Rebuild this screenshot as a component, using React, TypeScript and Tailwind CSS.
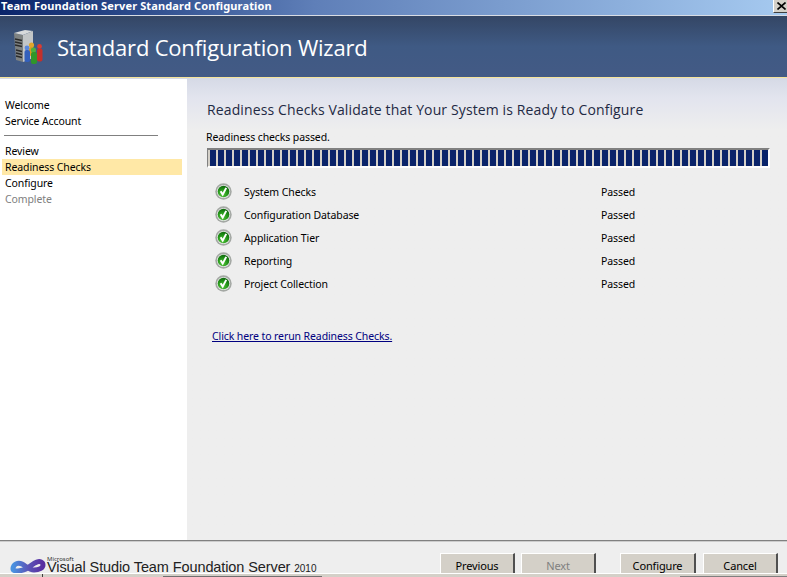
import React from "react";

const checks = ["System Checks", "Configuration Database", "Application Tier", "Reporting", "Project Collection"];

function Check() {
  return (
    <svg width="17" height="17" viewBox="0 0 17 17" className="shrink-0">
      <defs>
        <radialGradient id="g" cx="0.4" cy="0.75" r="0.8">
          <stop offset="0" stopColor="#55c93a" />
          <stop offset="0.6" stopColor="#1f8f16" />
          <stop offset="1" stopColor="#0b5f0b" />
        </radialGradient>
      </defs>
      <circle cx="8.5" cy="8.5" r="8.2" fill="#a4a8a4" />
      <circle cx="8.5" cy="8.5" r="6.6" fill="#e4e8e4" />
      <circle cx="8.5" cy="8.5" r="5.8" fill="url(#g)" />
      <path d="M5.6 8.2 L7.7 11.6 L11.2 4.9" fill="none" stroke="#fff" strokeWidth="2" />
    </svg>
  );
}

function ServerIcon() {
  return (
    <svg width="32" height="34" viewBox="0 0 32 34">
      <path d="M1 3 L10 5 L10 32 L3 30 Z" fill="#7e8282" />
      <path d="M1 3 L12 0 L20 1 L10 5 Z" fill="#d8dadb" />
      <path d="M10 5 L20 1 L20 28 L10 32 Z" fill="#c3c6c7" />
      <path d="M2 9 L9 10.5 M2 12 L9 13.5 M2 15 L9 16.5 M3 20 L9 21.5 M3 23 L9 24.5 M3 26 L9 27.5" stroke="#2b2b2b" strokeWidth="1.4" />
      <circle cx="18.5" cy="15" r="2.6" fill="#e2a62a" />
      <rect x="16" y="17" width="5" height="9" rx="2" fill="#d89a20" />
      <circle cx="26.5" cy="16.5" r="2.4" fill="#dc3c30" />
      <rect x="24" y="18.5" width="5.5" height="13" rx="2" fill="#c4302a" />
      <circle cx="14" cy="18" r="2.4" fill="#5a88dc" />
      <rect x="11.5" y="20" width="5.5" height="12" rx="2" fill="#3360bc" />
      <circle cx="20.5" cy="20" r="2.6" fill="#4cb03c" />
      <rect x="18" y="22" width="6" height="12" rx="2" fill="#2f962a" />
    </svg>
  );
}

function Logo() {
  return (
    <svg width="37" height="16" viewBox="0 0 37 16" className="shrink-0">
      <defs>
        <linearGradient id="v" x1="0" x2="1" y1="0" y2="0">
          <stop offset="0" stopColor="#4a92e0" />
          <stop offset="0.5" stopColor="#5a56b8" />
          <stop offset="1" stopColor="#5a2ea0" />
        </linearGradient>
      </defs>
      <path
        d="M3 12 C3 7 8 5 12 7 C16 9 19 13 24 13 C29 13 33 11 33 8 C33 5 30 4 27 5 C23 6 20 10 16 12 C12 14 3 15 3 12 Z"
        fill="none"
        stroke="url(#v)"
        strokeWidth="5"
      />
    </svg>
  );
}

function Btn({ label, disabled, w }: { label: string; disabled?: boolean; w: string }) {
  return (
    <div
      className={`${w} h-[20px] shrink-0 bg-[#d4d0c8] border-t border-l border-t-white border-l-white border-r-2 border-r-[#505050] flex items-end justify-center text-[11px] tracking-[-0.15px] leading-[15px] ${disabled ? "text-[#808080]" : "text-black"}`}
    >
      {label}
    </div>
  );
}

export default function App() {
  return (
    <div className="w-[787px] h-[577px] overflow-hidden flex flex-col bg-[#eeeeee] text-[10.5px] tracking-[-0.1px] leading-[16px] text-black font-['Noto_Sans',sans-serif]">
      {/* title bar */}
      <div className="h-[15px] shrink-0 flex items-start justify-between bg-gradient-to-r from-[#0a246a] via-[#5f7fb8] via-40% to-[#a6caf0]">
        <span className="pl-[1px] text-[11px] leading-[12px] tracking-[0.13px] font-bold text-white whitespace-nowrap">
          Team Foundation Server Standard Configuration
        </span>
        <div className="w-[15px] h-[13px] mr-[-1px] bg-[#d4d0c8] border-l border-b border-l-white border-b-[#404040] flex items-center justify-center">
          <svg width="9" height="8" viewBox="0 0 9 8">
            <path d="M0.5 0.5 L8.5 7.5 M8.5 0.5 L0.5 7.5" stroke="#000" strokeWidth="1.6" />
          </svg>
        </div>
      </div>
      <div className="h-px shrink-0 bg-[#d8dce4]" />
      {/* header */}
      <div className="h-[61px] shrink-0 flex items-center bg-gradient-to-b from-[#344665] via-[#3f5a84] via-50% to-[#435a85] pl-[13px]">
        <ServerIcon />
        <span className="ml-[12px] text-[22px] leading-[32px] tracking-[-0.2px] text-white whitespace-nowrap font-['Open_Sans',sans-serif]">
          Standard Configuration Wizard
        </span>
      </div>
      <div className="h-px shrink-0 bg-[#f5e39a]" />
      <div className="h-px shrink-0 bg-[#d5d9e6]" />
      {/* body */}
      <div className="h-[461px] shrink-0 flex">
        <div className="w-[187px] shrink-0 bg-white pt-[18px]">
          <div className="pl-[5px]">Welcome</div>
          <div className="pl-[5px]">Service Account</div>
          <div className="ml-[4px] mr-[29px] mt-[6px] mb-[7px] h-px bg-[#808080]" />
          <div className="pl-[5px]">Review</div>
          <div className="ml-[2px] mr-[5px] pl-[3px] bg-[#ffe8a6]">Readiness Checks</div>
          <div className="pl-[5px]">Configure</div>
          <div className="pl-[5px] text-[#808080]">Complete</div>
        </div>
        <div className="flex-1 bg-gradient-to-b from-[#d6dae6] via-[#e2e4ee] via-[4%] to-[#eeeeee] to-[11%] pl-[20px] pr-[19px] pt-[21px]">
          <div className="text-[14px] leading-[20px] tracking-[0.12px] text-[#1f2a44] whitespace-nowrap font-['Open_Sans',sans-serif]">
            Readiness Checks Validate that Your System is Ready to Configure
          </div>
          <div className="mt-[11px] -ml-[1px] leading-[13px]">Readiness checks passed.</div>
          <div className="mt-[4px] h-[20px] border-t-2 border-l border-t-[#808080] border-l-[#808080] border-r-2 border-b-2 border-r-white border-b-white bg-[#d4d0c8] pl-[2px] flex gap-[2px] overflow-hidden">
            {Array.from({ length: 70 }).map((_, i) => (
              <div key={i} className="w-[6px] shrink-0 bg-[#0a246a]" />
            ))}
          </div>
          <div className="mt-[15px] flex flex-col gap-[6px] pl-[8px]">
            {checks.map((c) => (
              <div key={c} className="h-[17px] flex items-center">
                <Check />
                <span className="ml-[12px] w-[357px]">{c}</span>
                <span>Passed</span>
              </div>
            ))}
          </div>
          <div className="mt-[36px] pl-[5px] text-[#000080] underline whitespace-nowrap">
            Click here to rerun Readiness Checks.
          </div>
        </div>
      </div>
      {/* footer */}
      <div className="h-[2px] shrink-0 bg-[#808080] border-b border-b-[#cccccc]" />
      <div className="h-[31px] shrink-0 flex items-start overflow-hidden">
        <div className="w-[440px] shrink-0 pl-[10px] flex relative h-full overflow-hidden">
          <div className="mt-[15px]"><Logo /></div>
          <div className="absolute left-[47px] top-[13px] text-[6px] leading-[8px] tracking-normal text-[#333]">Microsoft</div>
          <div className="mt-[16px] text-[14.5px] leading-[18px] tracking-[-0.1px] text-[#222] whitespace-nowrap font-['Liberation_Sans',sans-serif]">
            Visual Studio Team Foundation Server <span className="text-[10px] tracking-normal">2010</span>
          </div>
        </div>
        <div className="flex pt-[11px]">
          <Btn label="Previous" w="w-[75px]" />
          <div className="w-[6px]" />
          <Btn label="Next" disabled w="w-[75px]" />
          <div className="w-[24px]" />
          <Btn label="Configure" w="w-[76px]" />
          <div className="w-[7px]" />
          <Btn label="Cancel" w="w-[75px]" />
        </div>
      </div>
      <div className="h-[4px] shrink-0 bg-[#d4d0c8] border-t border-t-white flex items-end">
        <div className="w-[43px] h-[3px] border-r border-r-[#404040]" />
        <div className="w-[120px]" />
        <div className="w-[159px] h-px bg-[#707070]" />
        <div className="w-[358px]" />
        <div className="flex-1 h-px bg-[#808080]" />
      </div>
    </div>
  );
}
